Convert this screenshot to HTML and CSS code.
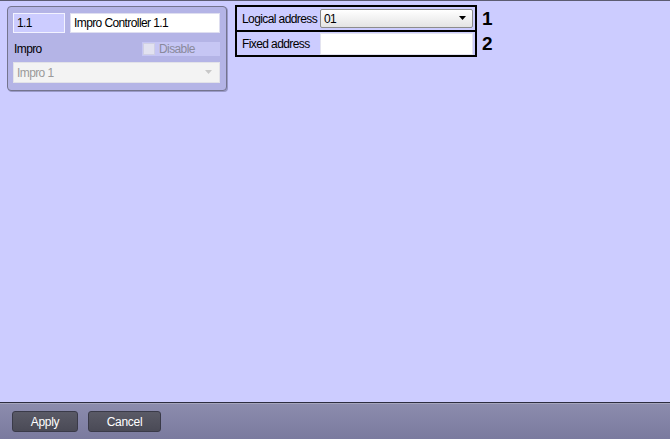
FILE: index.html
```html
<!DOCTYPE html>
<html lang="en">
<head>
    <meta charset="UTF-8">
    <title>Impro Controller</title>
    <link rel="stylesheet" href="styles.css">
</head>
<body>
    <div class="window">
        <div class="main">
            <!-- controller object panel -->
            <div class="panel">
                <div class="panel-row">
                    <div class="field field-id">1.1</div>
                    <div class="field field-name">Impro Controller 1.1</div>
                </div>
                <div class="panel-row row-type">
                    <span class="type-label">Impro</span>
                    <span class="disable">
                        <span class="checkbox"></span>
                        <span class="disable-text">Disable</span>
                    </span>
                </div>
                <div class="combo combo-disabled">
                    <span>Impro 1</span>
                    <svg width="9" height="5" viewBox="0 0 9 5"><path d="M1 0h7L4.5 4z" fill="#c8c8c8"/></svg>
                </div>
            </div>

            <!-- settings -->
            <div class="settings">
                <div class="setting-row">
                    <div class="setting-box">
                        <span class="setting-label">Logical address</span>
                        <div class="combo combo-address">
                            <span>01</span>
                            <svg width="9" height="5" viewBox="0 0 9 5"><path d="M1 0h7L4.5 4z" fill="#000"/></svg>
                        </div>
                    </div>
                    <span class="callout">1</span>
                </div>
                <div class="setting-row second">
                    <div class="setting-box">
                        <span class="setting-label">Fixed address</span>
                        <div class="input"></div>
                    </div>
                    <span class="callout">2</span>
                </div>
            </div>
        </div>

        <div class="footer">
            <button class="btn btn-apply">Apply</button>
            <button class="btn btn-cancel">Cancel</button>
        </div>
    </div>
</body>
</html>
```

FILE: styles.css
```css
body {
    margin: 0;
    font-family: "Liberation Sans", Arial, sans-serif;
    font-size: 12px;
    letter-spacing: -0.6px;
    color: #000;
}
.window {
    width: 670px;
    height: 439px;
    display: flex;
    flex-direction: column;
    background-color: #ccccff;
}
.main {
    flex: 1;
    display: flex;
    align-items: flex-start;
    gap: 8px;
    padding: 4px 0 0 7px;
    border-top: 1px solid #5c5c72;
}
.panel {
    width: 207px;
    margin-top: 1px;
    padding: 6px 6px 7px 5px;
    background-color: #b4b4e6;
    border: 1px solid #74748e;
    border-radius: 4px;
    box-shadow: 1px 1px 0 #9a9ac8;
}
.panel-row {
    display: flex;
    gap: 5px;
}
.field {
    height: 18px;
    line-height: 18px;
    padding-left: 3px;
    box-sizing: content-box;
}
.field-id {
    width: 47px;
    background-color: #ccccff;
    border: 1px solid #f2f2ff;
}
.field-name {
    flex: 1;
    background-color: #fff;
    border: 1px solid #dedef0;
}
.row-type {
    justify-content: space-between;
    align-items: center;
    margin-top: 9px;
    height: 14px;
}
.type-label {
    padding-left: 1px;
}
.disable {
    width: 78px;
    height: 14px;
    display: flex;
    align-items: center;
    gap: 4px;
    background-color: #c6c6f4;
}
.checkbox {
    width: 10px;
    height: 10px;
    margin-left: 1px;
    background-color: #e2e2f0;
    border: 1px solid #d0d0e4;
}
.disable-text {
    color: #8a8a9c;
}
.combo {
    display: flex;
    align-items: center;
    justify-content: space-between;
    padding: 0 6px 0 3px;
}
.combo-disabled {
    margin-top: 6px;
    height: 19px;
    background-color: #f3f3f3;
    border: 1px solid #e2e2e8;
    color: #9a9a9a;
}
.settings {
    display: flex;
    flex-direction: column;
}
.setting-row {
    display: flex;
    align-items: center;
    gap: 5px;
}
.setting-row.second {
    margin-top: -2px;
}
.setting-box {
    width: 231px;
    height: 23px;
    display: flex;
    align-items: center;
    padding: 0 2px 0 5px;
    border: 2px solid #000;
}
.setting-label {
    width: 78px;
    flex-shrink: 0;
}
.combo-address {
    flex: 1;
    height: 17px;
    background: linear-gradient(#ffffff, #e4e4e4);
    border: 1px solid #8c8c8c;
    border-radius: 2px;
    padding-right: 5px;
}
.input {
    flex: 1;
    height: 20px;
    background-color: #fff;
    border: 1px solid #e4e4f0;
}
.callout {
    font-size: 19px;
    font-weight: bold;
    letter-spacing: 0;
}
.footer {
    height: 36px;
    display: flex;
    align-items: flex-start;
    gap: 10px;
    padding: 0 0 0 12px;
    border-top: 1px solid #2c2c40;
    box-shadow: inset 0 1px 0 #a4a4bc;
    background: linear-gradient(#8c8cae, #7a7a9e);
}
.btn {
    margin-top: 8px;
    height: 21px;
    font-family: "Liberation Sans", Arial, sans-serif;
    font-size: 12px;
    letter-spacing: -0.3px;
    color: #fff;
    background: linear-gradient(#5a5a66, #4a4a56);
    border: 1px solid #3a3a48;
    border-radius: 3px;
    padding: 0;
}
.btn-apply {
    width: 66px;
}
.btn-cancel {
    width: 73px;
}
```
